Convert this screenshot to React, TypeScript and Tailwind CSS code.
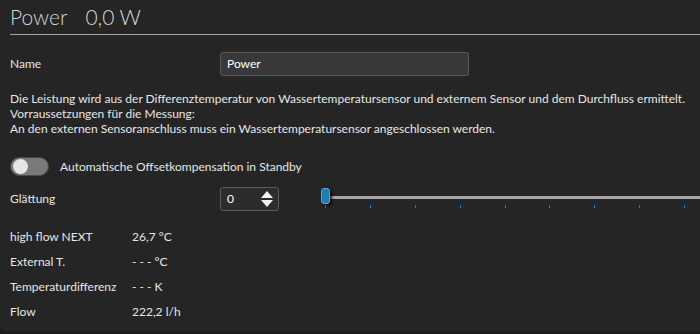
import React from 'react';

const rows = [
  { label: 'high flow NEXT', value: '26,7 °C' },
  { label: 'External T.', value: '- - - °C' },
  { label: 'Temperaturdifferenz', value: '- - - K' },
  { label: 'Flow', value: '222,2 l/h' },
];

const ticks = [0, 1, 2, 3, 4, 5, 6, 7, 8];

export default function App() {
  return (
    <div
      className="w-[700px] h-[334px] bg-[#1b1b1b] overflow-hidden text-[12px] text-[#e6e6e6]"
      style={{ fontFamily: 'Lato, "Noto Sans", sans-serif' }}
    >
      <div className="h-[331px] bg-[#252525] rounded-bl-[7px] pl-[10px]">
        {/* Header */}
        <div className="h-[35px] border-b border-[#a3a3a3] flex items-start pt-[3px]">
          <span className="text-[21px] leading-[28px] font-light text-[#d6d6d6]">Power</span>
          <span className="text-[21px] leading-[28px] font-light text-[#d6d6d6] ml-[18px]">0,0 W</span>
        </div>

        {/* Name */}
        <div className="flex items-center mt-[16px] h-[25px]">
          <span className="w-[210px]">Name</span>
          <div className="w-[249px] h-[24px] bg-[#383838] border border-[#595959] rounded-[3px] flex items-center px-[6px] text-white">
            Power
          </div>
        </div>

        {/* Description */}
        <div className="mt-[15px] leading-[15px] whitespace-nowrap">
          <p>Die Leistung wird aus der Differenztemperatur von Wassertemperatursensor und externem Sensor und dem Durchfluss ermittelt.</p>
          <p>Vorraussetzungen für die Messung:</p>
          <p>An den externen Sensoranschluss muss ein Wassertemperatursensor angeschlossen werden.</p>
        </div>

        {/* Toggle */}
        <div className="flex items-center mt-[21px] h-[19px]">
          <div className="w-[39px] h-[19px] rounded-full bg-[#7a7a7a] border border-[#4a4a4a] flex items-center pl-[2px]">
            <div className="w-[15px] h-[15px] rounded-full bg-[#e6e6e6]" />
          </div>
          <span className="ml-[11px]">Automatische Offsetkompensation in Standby</span>
        </div>

        {/* Glättung */}
        <div className="flex items-center mt-[11px] h-[24px]">
          <span className="w-[210px]">Glättung</span>
          <div className="w-[59px] h-[24px] bg-[#2c2c2c] border border-[#5a5a5a] rounded-[3px] flex items-center justify-between pl-[6px] pr-[4px] text-white">
            <span>0</span>
            <svg width="14" height="18" viewBox="0 0 14 18">
              <polygon points="7,1 13,8 1,8" fill="#f2f2f2" />
              <polygon points="1,10 13,10 7,17" fill="#f2f2f2" />
            </svg>
          </div>
          <div className="relative ml-[42px] flex-1 h-[24px]">
            <div className="absolute left-[6px] right-0 top-[9px] h-[3px] bg-[#a6a6a6]" />
            <div className="absolute left-0 top-[1px] w-[9px] h-[16px] rounded-[3px] bg-[#1a7db6] border border-[#5aa6d4] shadow-[2px_2px_3px_rgba(0,0,0,0.8)]" />
            <div className="absolute left-[4px] right-[15px] top-[18px] h-[3px] flex justify-between">
              {ticks.map((t) => (
                <div key={t} className="w-px h-[3px] bg-[#1a7db6]" />
              ))}
            </div>
          </div>
        </div>

        {/* Values */}
        <div className="mt-[18px] flex flex-col gap-[10px]">
          {rows.map((r) => (
            <div key={r.label} className="flex items-center h-[15px]">
              <span className="w-[122px]">{r.label}</span>
              <span>{r.value}</span>
            </div>
          ))}
        </div>
      </div>
    </div>
  );
}
